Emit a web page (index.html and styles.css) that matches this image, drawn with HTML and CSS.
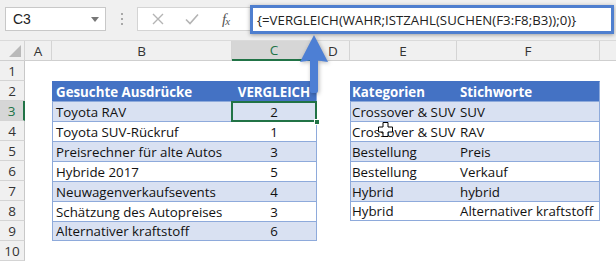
FILE: index.html
```html
<!DOCTYPE html>
<html>
<head>
<meta charset="utf-8">
<link rel="stylesheet" href="styles.css">
</head>
<body>
<div class="app">
  <div class="toolbar">
    <div class="namebox"><span class="name">C3</span><span class="dd"></span></div>
    <div class="dots"><i></i><i></i><i></i></div>
    <div class="fbtns">
      <svg class="ic-x" width="12" height="12" viewBox="0 0 12 12"><path d="M1 1 L11 11 M11 1 L1 11" stroke="#b4b4b4" stroke-width="1.4" fill="none"/></svg>
      <svg class="ic-ok" width="14" height="12" viewBox="0 0 14 12"><path d="M1 6.5 L5 10.5 L13 1.5" stroke="#b4b4b4" stroke-width="1.6" fill="none"/></svg>
      <span class="fx">f<sub>x</sub></span>
    </div>
    <div class="formula">{=VERGLEICH(WAHR;ISTZAHL(SUCHEN(F3:F8;B3));0)}</div>
  </div>
  <div class="sheet">
    <div class="ch corner"><span class="tri"></span></div>
    <div class="ch">A</div>
    <div class="ch">B</div>
    <div class="ch sel">C</div>
    <div class="ch">D</div>
    <div class="ch">E</div>
    <div class="ch">F</div>
    <div class="ch last"></div>

    <div class="rh">1</div><div class="c"></div><div class="c"></div><div class="c"></div><div class="c"></div><div class="c"></div><div class="c"></div><div class="c"></div>

    <div class="rh">2</div><div class="c"></div>
    <div class="c t hd l">Gesuchte Ausdrücke</div><div class="c t hd m r">VERGLEICH</div>
    <div class="c"></div>
    <div class="c t hd l e">Kategorien</div><div class="c t hd r">Stichworte</div><div class="c"></div>

    <div class="rh sel">3</div><div class="c"></div>
    <div class="c t b l">Toyota RAV</div><div class="c t b m r active">2<span class="handle"></span></div>
    <div class="c"></div>
    <div class="c t b l e">Crossover &amp; SUV</div><div class="c t b r">SUV</div><div class="c"></div>

    <div class="rh">4</div><div class="c"></div>
    <div class="c t l">Toyota SUV-Rückruf</div><div class="c t m r">1</div>
    <div class="c"></div>
    <div class="c t l e cur">Crossover &amp; SUV<svg class="cursor" width="15" height="15" viewBox="0 0 15 15"><path d="M5 0.5 H10 V5 H14.5 V10 H10 V14.5 H5 V10 H0.5 V5 H5 Z" fill="#fff" stroke="#000" stroke-width="1"/></svg></div><div class="c t r">RAV</div><div class="c"></div>

    <div class="rh">5</div><div class="c"></div>
    <div class="c t b l">Preisrechner für alte Autos</div><div class="c t b m r">3</div>
    <div class="c"></div>
    <div class="c t b l e">Bestellung</div><div class="c t b r">Preis</div><div class="c"></div>

    <div class="rh">6</div><div class="c"></div>
    <div class="c t l">Hybride 2017</div><div class="c t m r">5</div>
    <div class="c"></div>
    <div class="c t l e">Bestellung</div><div class="c t r">Verkauf</div><div class="c"></div>

    <div class="rh">7</div><div class="c"></div>
    <div class="c t b l">Neuwagenverkaufsevents</div><div class="c t b m r">4</div>
    <div class="c"></div>
    <div class="c t b l e">Hybrid</div><div class="c t b r">hybrid</div><div class="c"></div>

    <div class="rh">8</div><div class="c"></div>
    <div class="c t l">Schätzung des Autopreises</div><div class="c t m r">3</div>
    <div class="c"></div>
    <div class="c t l e bt">Hybrid</div><div class="c t r bt">Alternativer kraftstoff</div><div class="c"></div>

    <div class="rh">9</div><div class="c"></div>
    <div class="c t b l bt">Alternativer kraftstoff</div><div class="c t b m r bt">6</div>
    <div class="c"></div><div class="c"></div><div class="c"></div><div class="c"></div>

    <div class="rh">10</div><div class="c"></div><div class="c"></div><div class="c"></div><div class="c"></div><div class="c"></div><div class="c"></div><div class="c"></div>
  </div>
  <svg class="arrow" width="40" height="70" viewBox="0 0 40 70">
    <path d="M19 1 L33 28 L23 26.5 L23 57 Q23 59 21 59 L17 59 Q15 59 15 57 L15 26.5 L5 28 Z" fill="#4d7fd4"/>
  </svg>
</div>
</body>
</html>
```
FILE: styles.css
```css
* { box-sizing: border-box; }
html, body { margin: 0; padding: 0; }
body { width: 616px; height: 261px; overflow: hidden; background: #fff; font-family: "Liberation Sans", Arial, sans-serif; }
.app { position: relative; width: 616px; height: 261px; }

.toolbar { height: 41px; background: #f0f0f0; display: flex; align-items: flex-start; padding: 7px 0 0 5px; border-bottom: 1px solid #dadada; }
.namebox { width: 101px; height: 24px; background: #fff; border: 1px solid #c8c8c8; display: flex; align-items: center; justify-content: space-between; padding: 0 6px 0 7px; }
.name { font-size: 14px; color: #222; }
.dd { width: 0; height: 0; border-left: 4.5px solid transparent; border-right: 4.5px solid transparent; border-top: 5px solid #777; margin-top: 1px; }
.dots { width: 31px; height: 24px; display: flex; flex-direction: column; align-items: center; justify-content: center; gap: 3px; }
.dots i { display: block; width: 2px; height: 2px; background: #a8a8a8; }
.fbtns { width: 113px; height: 24px; background: #fff; border: 1px solid #d4d4d4; border-right: none; display: flex; align-items: center; padding-left: 14px; }
.ic-x { margin-right: 21px; }
.ic-ok { margin-right: 23px; }
.fx { font-family: "Liberation Serif", serif; font-style: italic; font-size: 15px; color: #555; letter-spacing: -1px; }
.fx sub { font-size: 11px; vertical-align: -1px; }
.formula { margin-top: -2px; width: 364px; height: 29px; background: #fff; border: 3px solid #4f7fcf; box-shadow: 0 1px 4px rgba(0,0,0,0.35); font-family: "Open Sans", sans-serif; font-size: 13.2px; color: #222; padding: 2px 0 0 4px; letter-spacing: 0.05px; line-height: 20px; white-space: nowrap; }

.sheet { display: grid; grid-template-columns: 25px 27px 180px 85px 33px 107px 143px 16px; grid-template-rows: 20px repeat(10, 20px); font-family: "Open Sans", sans-serif; font-size: 13.3px; color: #111; }
.ch { background: #f0f0f0; border-right: 1px solid #d4d4d4; border-bottom: 1px solid #cfcfcf; display: flex; align-items: center; justify-content: center; font-size: 13.5px; color: #333; }
.ch.sel { background: #d6d6d6; border-bottom: 2px solid #217346; color: #217346; }
.ch.last { border-right: none; }
.corner { position: relative; }
.tri { position: absolute; right: 3px; bottom: 3px; width: 0; height: 0; border-left: 12px solid transparent; border-bottom: 12px solid #b9b9b9; }
.rh { background: #f0f0f0; border-right: 1px solid #c8c8c8; border-bottom: 1px solid #d4d4d4; display: flex; align-items: center; justify-content: center; font-size: 13.5px; color: #333; }
.rh.sel { background: #d6d6d6; border-right: 2px solid #217346; color: #217346; }
.c { background: #fff; white-space: nowrap; display: flex; align-items: center; padding-left: 3px; line-height: 18px; }
.c.e { padding-left: 1px; }
.t { border-top: 1px solid #8eaadb; }
.t.l { border-left: 1px solid #8eaadb; }
.t.r { border-right: 1px solid #8eaadb; }
.t.bt { border-bottom: 1px solid #8eaadb; }
.t.b { background: #d9e1f2; }
.t.hd { background: #4472c4; color: #fff; font-weight: bold; border-top-color: #4472c4; }
.t.hd.l { border-left-color: #4472c4; }
.t.m { justify-content: center; padding-left: 0; }
.active { position: relative; }
.active::after { content: ""; position: absolute; left: -1px; top: -1px; right: -1px; bottom: -1px; border: 2px solid #217346; }
.handle { position: absolute; right: -4px; bottom: -4px; width: 6px; height: 6px; background: #217346; border: 1px solid #fff; z-index: 2; }
.cur { position: relative; }
.cursor { position: absolute; left: 27px; top: 0px; }
.arrow { position: absolute; left: 295px; top: 34px; filter: drop-shadow(1px 1px 2px rgba(0,0,0,0.3)); }
```
